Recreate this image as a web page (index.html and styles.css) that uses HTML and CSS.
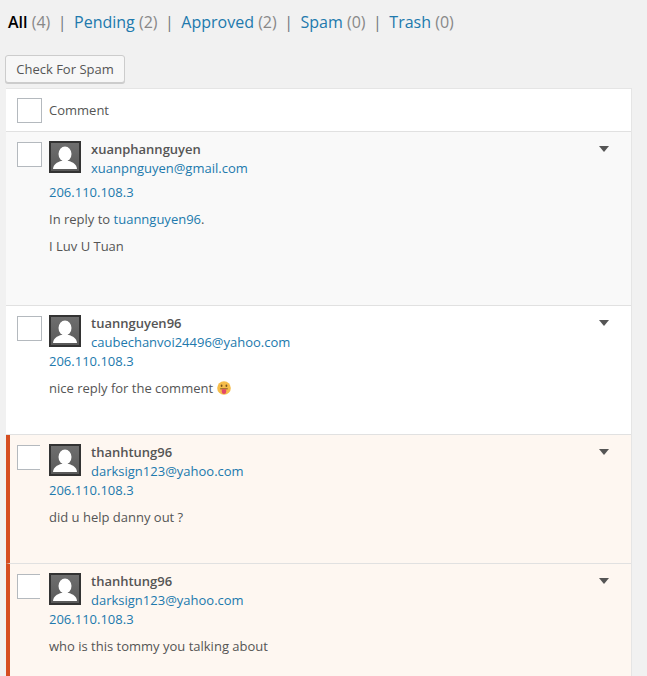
FILE: index.html
```html
<!DOCTYPE html>
<html lang="en">
<head>
    <meta charset="UTF-8">
    <meta name="viewport" content="width=device-width, initial-scale=1.0">
    <title>Comments</title>
    <link rel="stylesheet" href="styles.css">
</head>
<body>

<ul class="status-links">
    <li><a class="current">All</a> <span class="count">(4)</span></li>
    <li><a>Pending</a> <span class="count">(2)</span></li>
    <li><a>Approved</a> <span class="count">(2)</span></li>
    <li><a>Spam</a> <span class="count">(0)</span></li>
    <li><a>Trash</a> <span class="count">(0)</span></li>
</ul>

<button class="spam-button">Check For Spam</button>

<div class="comment-list">
    <div class="list-head">
        <span class="check"></span>
        <span>Comment</span>
    </div>

    <div class="comment reply-row">
        <span class="check"></span>
        <div class="comment-body">
            <div class="author">
                <svg class="avatar" viewBox="0 0 32 32"><use href="#avatar-icon"/></svg>
                <div>
                    <strong>xuanphannguyen</strong>
                    <a>xuanpnguyen@gmail.com</a>
                </div>
            </div>
            <a class="ip">206.110.108.3</a>
            <p>In reply to <a>tuannguyen96</a>.</p>
            <p>I Luv U Tuan</p>
        </div>
        <span class="toggle"></span>
    </div>

    <div class="comment plain-row">
        <span class="check"></span>
        <div class="comment-body">
            <div class="author">
                <svg class="avatar" viewBox="0 0 32 32"><use href="#avatar-icon"/></svg>
                <div>
                    <strong>tuannguyen96</strong>
                    <a>caubechanvoi24496@yahoo.com</a>
                </div>
            </div>
            <a class="ip">206.110.108.3</a>
            <p>nice reply for the comment
                <svg class="emoji" viewBox="0 0 14 14">
                    <circle cx="7" cy="7" r="6.8" fill="#f6bd4a"/>
                    <ellipse cx="4.6" cy="4.800" rx=".9" ry="1.200" fill="#7a5624"/>
                    <ellipse cx="9.4" cy="4.800" rx=".9" ry="1.200" fill="#7a5624"/>
                    <path d="M3.200 7.800h7.600" stroke="#8a5a28" stroke-width="1" fill="none"/>
                    <path d="M4.800 8.200h4.400v2.500a2.200 2.200 0 0 1-4.400 0z" fill="#e2476a"/>
                </svg>
            </p>
        </div>
        <span class="toggle"></span>
    </div>

    <div class="comment pending plain-row">
        <span class="check"></span>
        <div class="comment-body">
            <div class="author">
                <svg class="avatar" viewBox="0 0 32 32"><use href="#avatar-icon"/></svg>
                <div>
                    <strong>thanhtung96</strong>
                    <a>darksign123@yahoo.com</a>
                </div>
            </div>
            <a class="ip">206.110.108.3</a>
            <p>did u help danny out ?</p>
        </div>
        <span class="toggle"></span>
    </div>

    <div class="comment pending plain-row">
        <span class="check"></span>
        <div class="comment-body">
            <div class="author">
                <svg class="avatar" viewBox="0 0 32 32"><use href="#avatar-icon"/></svg>
                <div>
                    <strong>thanhtung96</strong>
                    <a>darksign123@yahoo.com</a>
                </div>
            </div>
            <a class="ip">206.110.108.3</a>
            <p>who is this tommy you talking about</p>
        </div>
        <span class="toggle"></span>
    </div>
</div>

<svg class="icon-defs" width="0" height="0">
    <defs>
        <linearGradient id="avatar-bg" x1="0" y1="0" x2="0" y2="1">
            <stop offset="0" stop-color="#6e6e6e"/>
            <stop offset="1" stop-color="#5a5a5a"/>
        </linearGradient>
        <g id="avatar-icon">
            <rect width="32" height="32" fill="#333"/>
            <rect x="2" y="2" width="28" height="28" fill="url(#avatar-bg)"/>
            <ellipse cx="16" cy="13" rx="6.500" ry="7.500" fill="#fff"/>
            <path d="M4 28c.5-5 4-6.500 8-8h8c4 1.500 7.500 3 8 8z" fill="#fff"/>
        </g>
    </defs>
</svg>

</body>
</html>
```

FILE: styles.css
```css
* {
    box-sizing: border-box;
    margin: 0;
    padding: 0;
}
html {
    overflow: hidden;
}
body {
    font-family: "Open Sans", sans-serif;
    font-size: 13px;
    line-height: 19px;
    color: #555;
    background-color: #f1f1f1;
    height: 676px;
    overflow: hidden;
}
a {
    color: #2179ad;
}
.icon-defs {
    position: absolute;
}
.status-links {
    display: flex;
    list-style: none;
    font-size: 16px;
    line-height: 22px;
    padding: 11px 0 0 8px;
}
.status-links li + li::before {
    content: "|";
    color: #72777c;
    margin: 0 7.5px;
}
.status-links .current {
    color: #000;
    font-weight: 600;
}
.count {
    color: #888;
}
.spam-button {
    display: block;
    margin: 22px 0 5px 5px;
    width: 120px;
    height: 28px;
    font-family: inherit;
    font-size: 13px;
    color: #555;
    background-color: #f7f7f7;
    border: 1px solid #ccc;
    border-radius: 3px;
    box-shadow: 0 1px 0 #ccc;
}
.comment-list {
    width: 626px;
    margin-left: 6px;
    background-color: #fff;
    border-right: 1px solid #e5e5e5;
    border-top: 1px solid #e5e5e5;
}
.list-head {
    display: flex;
    align-items: center;
    gap: 7px;
    height: 43px;
    padding-left: 11px;
    border-bottom: 1px solid #e1e1e1;
}
.check {
    flex: none;
    display: block;
    width: 25px;
    height: 25px;
    background-color: #fff;
    border: 1px solid #b4b9be;
}
.comment {
    display: flex;
    gap: 7px;
    padding: 9px 0 0 11px;
    border-bottom: 1px solid #e1e1e1;
}
.comment .check {
    margin-top: 1px;
}
.reply-row {
    height: 174px;
    background-color: #f9f9f9;
}
.plain-row {
    height: 129px;
}
.pending {
    background-color: #fef7f1;
    border-left: 4px solid #d54e21;
    padding-left: 7px;
}
.pending .check {
    width: 23px;
    border-right: none;
}
.pending .comment-body {
    margin-left: 2px;
}
.comment-body {
    flex: 1;
}
.author {
    display: flex;
    gap: 10px;
}
.avatar {
    flex: none;
    width: 32px;
    height: 32px;
}
.author strong,
.author a {
    display: block;
}
.author strong {
    font-weight: 600;
}
.author > div {
    margin-top: -1px;
}
.ip {
    display: block;
}
.reply-row .ip {
    margin-top: 5px;
}
.comment-body p {
    margin-top: 8px;
}
.emoji {
    width: 14px;
    height: 14px;
    margin-left: 1px;
    vertical-align: -2px;
}
.toggle {
    flex: none;
    width: 0;
    height: 0;
    margin: 5px 22px 0 0;
    border-left: 5px solid transparent;
    border-right: 5px solid transparent;
    border-top: 6px solid #555;
}
```
